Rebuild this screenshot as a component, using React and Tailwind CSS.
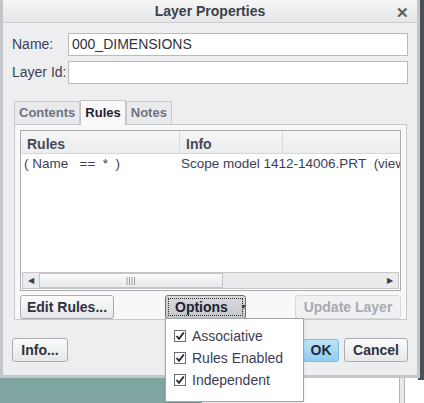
import { useState } from 'react'

const FONT = { fontFamily: '"Liberation Sans", Arial, sans-serif' }

function Btn({ children, className = '' }) {
  return (
    <div
      className={
        'flex h-[24px] items-center justify-center rounded-[3px] border border-[#a9acb0] bg-gradient-to-b from-[#fbfbfb] to-[#e6e7e9] text-[14px] font-bold text-[#2e3340] ' +
        className
      }
    >
      {children}
    </div>
  )
}

function Check() {
  return (
    <svg width="12" height="12" viewBox="0 0 12 12" className="shrink-0">
      <rect x="0.5" y="0.5" width="11" height="11" fill="#fff" stroke="#6b6f78" />
      <path d="M2.5 6 L5 8.8 L9.8 2.5" fill="none" stroke="#1f2430" strokeWidth="1.8" />
    </svg>
  )
}

export default function App() {
  const [tab] = useState('Rules')
  const tabs = ['Contents', 'Rules', 'Notes']

  return (
    <div style={FONT} className="relative h-[403px] w-[424px] overflow-hidden bg-[#7fa6a0]">
      {/* desktop pieces behind the dialog */}
      <div className="absolute left-[201px] top-[370px] h-[40px] w-[223px] border-l border-[#9a9a9a] bg-white">
        <div className="absolute left-[197px] top-0 h-full w-[6px] border-x border-[#b5b5b5] bg-[#e8e8e8]" />
        <div className="absolute left-[14px] top-[22px] h-[10px] w-[16px] rounded-sm border border-[#c9c4a8] bg-[#f7f3df]" />
      </div>
      <div className="absolute right-0 top-0 h-[380px] w-[6px] bg-[#4a5058]" />

      {/* dialog window */}
      <div className="absolute left-0 top-0 flex h-[378px] w-[420px] flex-col border-x-[3px] border-b-[3px] border-[#c3c6ca] bg-[#eceef0]">
        <div className="relative flex h-[23px] shrink-0 items-center justify-center border-b border-[#c9cbce] bg-gradient-to-b from-[#f6f6f6] to-[#e5e6e8]">
          <span className="text-[14px] font-bold text-[#3b3f4a]">Layer Properties</span>
          <span className="absolute right-[8px] top-[2px] text-[15px] font-bold text-[#5b5e66]">✕</span>
        </div>

        <div className="flex flex-col px-[9px] pt-[10px]">
          <div className="flex items-center gap-0">
            <span className="w-[56px] text-[14px] text-[#3c3d55]">Name:</span>
            <div className="flex h-[23px] flex-1 items-center border border-[#b8babd] bg-white px-[3px] text-[14px] text-[#2f3340]">
              000_DIMENSIONS
            </div>
          </div>
          <div className="mt-[5px] flex items-center">
            <span className="w-[56px] text-[14px] text-[#3c3d55]">Layer Id:</span>
            <div className="h-[23px] flex-1 border border-[#b8babd] bg-white" />
          </div>

          <div className="mt-[16px] flex items-end pl-[2px]">
            {tabs.map((t) => (
              <div
                key={t}
                className={
                  t === tab
                    ? 'relative -mb-px flex h-[25px] items-center border border-b-0 border-[#c3c5c8] bg-[#f9f9f9] px-[4px] text-[13px] font-bold text-[#1f2330]'
                    : 'flex h-[23px] items-center border border-b-0 border-[#c9cbce] bg-[#e9eaec] px-[4px] text-[13px] font-bold text-[#6e7280]'
                }
              >
                {t}
              </div>
            ))}
          </div>

          <div className="ml-[2px] mr-[1px] flex h-[196px] flex-col border border-[#c6c8cb] bg-[#f8f8f8] px-[5px] pt-[5px]">
            <div className="flex h-[162px] flex-col border border-[#a9abae] bg-white">
              <div className="flex h-[23px] border-b border-[#d5d7da] bg-gradient-to-b from-[#f6f6f6] to-[#ebecee] text-[14px] font-bold text-[#454957]">
                <div className="w-[159px] border-r border-[#d9dadd] pl-[6px] pt-[3px]">Rules</div>
                <div className="w-[103px] border-r border-[#d9dadd] pl-[6px] pt-[3px]">Info</div>
                <div className="flex-1" />
              </div>
              <div className="flex h-[20px] items-center overflow-hidden whitespace-nowrap text-[13.5px] text-[#3c3d55]">
                <span className="w-[159px] shrink-0 pl-[3px]">( Name &nbsp; == &nbsp;* &nbsp;)</span>
                <span className="pl-[1px]">Scope model 1412-14006.PRT&nbsp; (view i</span>
              </div>
              <div className="flex-1" />
              <div className="mx-[1px] mb-[1px] flex h-[17px] border border-[#c4c6c9] bg-[#eaebed]">
                <div className="flex w-[16px] items-center justify-center text-[8px] text-[#3a3d45]">◀</div>
                <div className="flex w-[184px] items-center justify-center border border-[#c2c4c7] bg-gradient-to-b from-[#fafafa] to-[#e9eaec]">
                  <svg width="10" height="8" viewBox="0 0 10 8">
                    <path d="M1 0V8M3.5 0V8M6 0V8M8.5 0V8" stroke="#9a9da3" strokeWidth="1" />
                  </svg>
                </div>
                <div className="flex-1" />
                <div className="flex w-[16px] items-center justify-center text-[8px] text-[#3a3d45]">▶</div>
              </div>
            </div>

            <div className="mt-[4px] flex items-center">
              <Btn className="w-[94px]">Edit Rules...</Btn>
              <div className="ml-[51px] flex h-[24px] w-[81px] items-center rounded-[3px] border border-[#6c7078] bg-gradient-to-b from-[#d9dadc] to-[#c6c8cb] p-[2px]">
                <div className="flex h-full w-full items-center border border-dotted border-[#2b2b2b] pl-[6px] text-[14px] font-bold text-[#1e2230]">
                  Options
                  <span className="ml-[12px] text-[7px] text-[#3a3d45]">▼</span>
                </div>
              </div>
              <div className="ml-auto flex h-[24px] w-[106px] items-center justify-center rounded-[3px] border border-[#d6d8db] bg-[#f0f1f2] text-[14px] font-bold text-[#a7aab0]">
                Update Layer
              </div>
            </div>
          </div>

          <div className="mt-[18px] flex items-center">
            <Btn className="w-[56px]">Info...</Btn>
            <div className="ml-auto flex h-[23px] w-[36px] items-center justify-center rounded-[3px] border border-[#7cbde6] bg-gradient-to-b from-[#bfe4f9] to-[#8fcdf1] text-[14px] font-bold text-[#1e2a38]">
              OK
            </div>
            <Btn className="ml-[5px] w-[64px]">Cancel</Btn>
          </div>
        </div>
      </div>

      {/* options dropdown menu */}
      <div className="absolute left-[165px] top-[318px] flex w-[139px] flex-col border border-[#a3a6aa] bg-white pb-[10px] pt-[6px] shadow-sm">
        {['Associative', 'Rules Enabled', 'Independent'].map((label) => (
          <div key={label} className="flex h-[22px] items-center gap-[6px] pl-[8px] text-[14px] text-[#3c3d55]">
            <Check />
            {label}
          </div>
        ))}
      </div>
    </div>
  )
}
